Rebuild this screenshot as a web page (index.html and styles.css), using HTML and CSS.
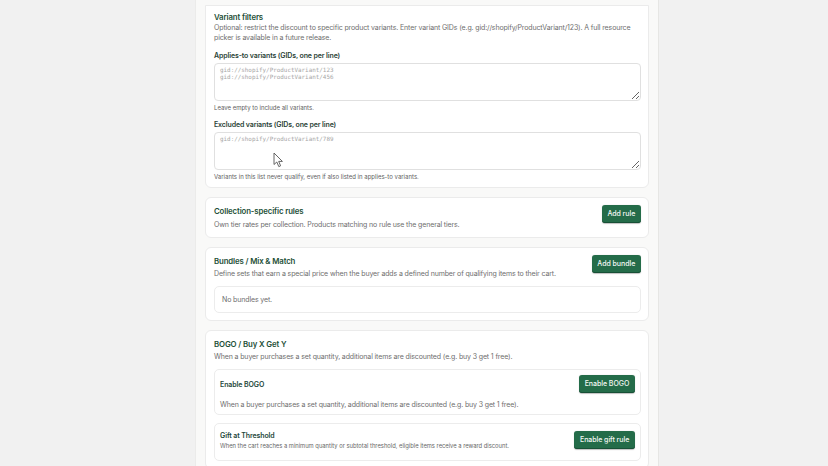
FILE: index.html
```html
<!DOCTYPE html>
<html lang="en">
<head>
<meta charset="utf-8">
<title>Discount settings</title>
<link rel="stylesheet" href="styles.css">
</head>
<body>
<div class="page">
  <main class="column">
    <section class="card card-first">
      <h2 class="title title-tight">Variant filters</h2>
      <p class="desc desc-tight">Optional: restrict the discount to specific product variants. Enter variant GIDs (e.g. gid://shopify/ProductVariant/123). A full resource picker is available in a future release.</p>
      <div class="field">
        <label class="label" for="applies">Applies-to variants (GIDs, one per line)</label>
        <textarea id="applies" class="input" placeholder="gid://shopify/ProductVariant/123&#10;gid://shopify/ProductVariant/456"></textarea>
        <p class="help">Leave empty to include all variants.</p>
      </div>
      <div class="field">
        <label class="label" for="excluded">Excluded variants (GIDs, one per line)</label>
        <textarea id="excluded" class="input" placeholder="gid://shopify/ProductVariant/789"></textarea>
        <p class="help">Variants in this list never qualify, even if also listed in applies-to variants.</p>
      </div>
    </section>

    <section class="card">
      <div class="head">
        <div class="head-text">
          <h2 class="title">Collection-specific rules</h2>
          <p class="desc">Own tier rates per collection. Products matching no rule use the general tiers.</p>
        </div>
        <button class="btn" type="button">Add rule</button>
      </div>
    </section>

    <section class="card">
      <div class="head">
        <div class="head-text">
          <h2 class="title">Bundles / Mix &amp; Match</h2>
          <p class="desc">Define sets that earn a special price when the buyer adds a defined number of qualifying items to their cart.</p>
        </div>
        <button class="btn" type="button">Add bundle</button>
      </div>
      <div class="sub sub-empty">
        <p class="desc">No bundles yet.</p>
      </div>
    </section>

    <section class="card">
      <h2 class="title">BOGO / Buy X Get Y</h2>
      <p class="desc">When a buyer purchases a set quantity, additional items are discounted (e.g. buy 3 get 1 free).</p>
      <div class="sub sub-bogo">
        <div class="row">
          <h3 class="subtitle">Enable BOGO</h3>
          <button class="btn" type="button">Enable BOGO</button>
        </div>
        <p class="desc sub-desc">When a buyer purchases a set quantity, additional items are discounted (e.g. buy 3 get 1 free).</p>
      </div>
      <div class="sub sub-gift">
        <div class="row">
          <div class="row-text">
            <h3 class="subtitle">Gift at Threshold</h3>
            <p class="help help-gift">When the cart reaches a minimum quantity or subtotal threshold, eligible items receive a reward discount.</p>
          </div>
          <button class="btn" type="button">Enable gift rule</button>
        </div>
      </div>
    </section>
  </main>
</div>
<svg class="cursor" width="11" height="16" viewBox="0 0 11 16" aria-hidden="true">
  <path d="M1 1 L1 12.5 L3.8 10 L5.8 14.6 L7.6 13.8 L5.7 9.4 L9.4 9.4 Z" fill="#fff" stroke="#555" stroke-width="0.9" stroke-linejoin="round"/>
</svg>
</body>
</html>
```

FILE: styles.css
```css
html, body {
  margin: 0;
  padding: 0;
}
body {
  background: #f1f1f1;
  font-family: Inter, "Noto Sans", "Liberation Sans", sans-serif;
  color: #303030;
  height: 466px;
  overflow: hidden;
}
.page {
  display: flex;
}
.column {
  margin-left: 195px;
  width: 464px;
  box-sizing: border-box;
  background: #f9f9f8;
  border-left: 1px solid #ebebea;
  border-right: 1px solid #e6e6e4;
  padding: 5px 9px 0;
  min-height: 466px;
  display: flex;
  flex-direction: column;
  gap: 9.5px;
}
.card {
  background: #ffffff;
  border: 1px solid #ebebeb;
  border-radius: 6px;
  padding: 7px 7px 7px 8px;
}
.card-first {
  padding: 5.5px 7px 5.5px 8px;
  border-top-left-radius: 0;
  border-top-right-radius: 0;
}
.title {
  margin: 0;
  font-size: 7.8px;
  line-height: 12px;
  font-weight: 600;
  letter-spacing: -0.12px;
  color: #1d4f37;
}
.title-tight {
  line-height: 11px;
}
.desc {
  margin: 1.3px 0 0;
  font-size: 7px;
  line-height: 11px;
  letter-spacing: -0.13px;
  color: #6e6e6e;
}
.desc-tight {
  margin-top: 0;
  line-height: 10.4px;
}
.field {
  margin-top: 7px;
}
.label {
  display: block;
  font-size: 7px;
  line-height: 11px;
  font-weight: 600;
  letter-spacing: -0.12px;
  color: #2a4236;
}
.input {
  display: block;
  box-sizing: border-box;
  width: 100%;
  height: 38.5px;
  margin: 1.5px 0 0;
  padding: 3.6px 5px;
  border: 1px solid #e0e0e0;
  border-radius: 4px;
  background: #fff;
  font-family: "DejaVu Sans Mono", "Liberation Mono", monospace;
  font-size: 5.9px;
  line-height: 6.7px;
  color: #303030;
  resize: vertical;
  outline: none;
}
.input::placeholder {
  color: #a6a6a6;
}
.help {
  margin: 2px 0 0;
  font-size: 6px;
  line-height: 9px;
  color: #616161;
}
.head {
  display: flex;
  justify-content: space-between;
  align-items: flex-start;
  gap: 10px;
}
.btn {
  flex: none;
  height: 17.5px;
  padding: 0 5.8px;
  border: none;
  border-radius: 3px;
  background: #246c49;
  box-shadow: inset 0 -1px 0 #185036, 0 0.5px 1px rgba(0,0,0,0.25);
  color: #f4f8f5;
  font-family: inherit;
  font-size: 7px;
  font-weight: 500;
  letter-spacing: -0.05px;
  line-height: 17.5px;
  cursor: pointer;
}
.sub {
  border: 1px solid #ececec;
  border-radius: 5px;
  background: #fff;
  margin-top: 7px;
}
.sub-empty {
  padding: 6.6px 7px;
}
.sub-empty .desc {
  margin: 0;
}
.sub-bogo {
  padding: 5px 5px 4px;
}
.sub-gift {
  margin-top: 8px;
  padding: 5.7px 5px 10px;
}
.row {
  display: flex;
  justify-content: space-between;
  align-items: center;
  gap: 10px;
}
.subtitle {
  margin: 0;
  font-size: 7px;
  line-height: 11px;
  font-weight: 600;
  letter-spacing: -0.1px;
  color: #24473a;
}
.sub-desc {
  margin-top: 6.2px;
}
.help-gift {
  margin: 0;
  font-size: 5.8px;
  color: #666;
}
.cursor {
  position: absolute;
  left: 273px;
  top: 152px;
}
```
